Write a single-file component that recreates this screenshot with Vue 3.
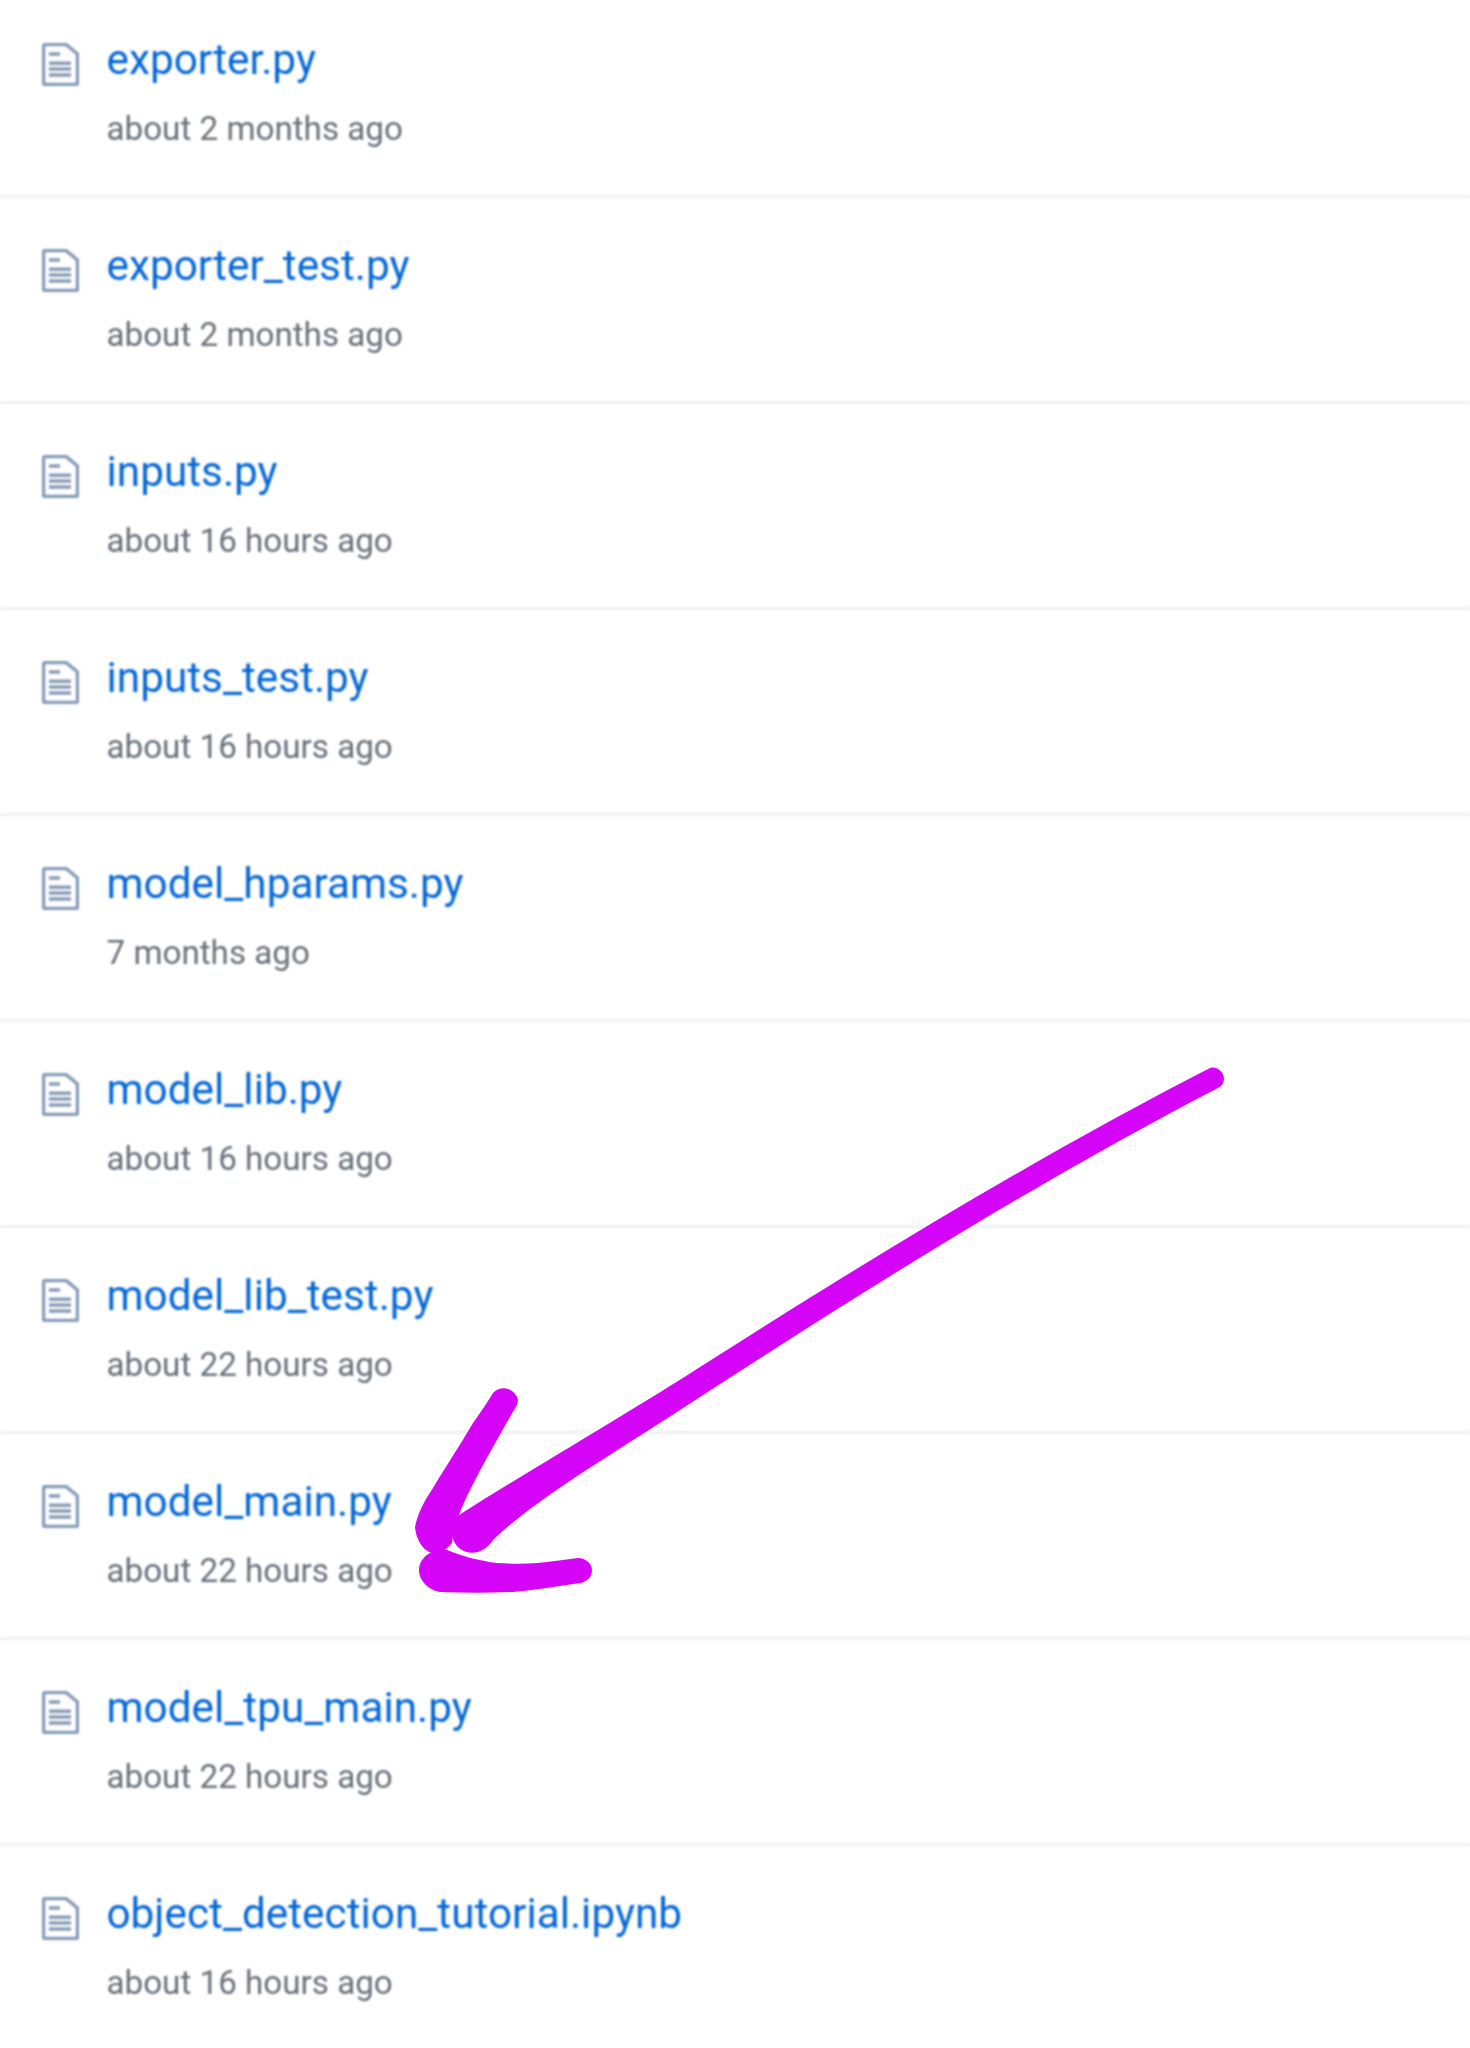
<script setup>
const files = [
  { name: 'exporter.py', age: 'about 2 months ago' },
  { name: 'exporter_test.py', age: 'about 2 months ago' },
  { name: 'inputs.py', age: 'about 16 hours ago' },
  { name: 'inputs_test.py', age: 'about 16 hours ago' },
  { name: 'model_hparams.py', age: '7 months ago' },
  { name: 'model_lib.py', age: 'about 16 hours ago' },
  { name: 'model_lib_test.py', age: 'about 22 hours ago' },
  { name: 'model_main.py', age: 'about 22 hours ago' },
  { name: 'model_tpu_main.py', age: 'about 22 hours ago' },
  { name: 'object_detection_tutorial.ipynb', age: 'about 16 hours ago' }
]
</script>

<template>
  <div class="page">
    <ul class="file-list">
      <li v-for="file in files" :key="file.name" class="file-row">
        <svg class="file-icon" viewBox="0 0 37 43" fill="none">
          <path class="outline" d="M3.500 1.500H24L35.500 11V39.500A2 2 0 0 1 33.500 41.500H3.500A2 2 0 0 1 1.500 39.500V3.500A2 2 0 0 1 3.500 1.500Z" />
          <path class="lines" d="M7 11H18M7 20.300H29M7 26H29M7 32H29" />
        </svg>
        <div class="file-text">
          <a class="file-name">{{ file.name }}</a>
          <div class="file-age">{{ file.age }}</div>
        </div>
      </li>
    </ul>

    <!-- hand drawn arrow on top of the list -->
    <svg class="scribble" viewBox="0 0 1470 2048">
      <path d="M1210 1068C1217 1066 1224 1072 1224 1079C1224 1083 1222 1086 1218 1088C1050 1175 880 1280 700 1397C620 1450 540 1495 493 1540C485 1552 472 1556 462 1550C454 1545 451 1537 453 1530C455 1524 456 1519 459 1515C530 1470 640 1406 700 1367C880 1252 1050 1150 1210 1068Z" />
      <path d="M493 1393C499 1386 510 1387 515 1394C519 1398 518 1402 517 1405C508 1420 501 1433 493 1447C485 1461 477 1476 470 1490C465 1500 462 1507 459 1515C455 1525 453 1535 452 1543C445 1552 438 1553 433 1553C424 1552 416 1540 415 1527C418 1512 425 1500 433 1488C445 1468 460 1445 473 1423C480 1413 487 1403 493 1393Z" />
      <path d="M430 1553C436 1550 442 1549 447 1550C465 1557 480 1561 497 1563C515 1564 532 1564 547 1562C558 1561 568 1559 578 1558C586 1558 592 1564 592 1570C592 1577 587 1582 580 1583C558 1586 535 1590 513 1592C490 1593 465 1593 440 1592C429 1590 419 1581 419 1570C419 1563 423 1557 430 1553Z" />
    </svg>
  </div>
</template>

<style>
body {
  background: #fff;
}
</style>

<style scoped>
.page {
  position: relative;
  width: 1470px;
  height: 2048px;
  overflow: hidden;
  background: #fff;
  font-family: Roboto, "Liberation Sans", sans-serif;
}
.file-list {
  list-style: none;
  margin: -8px 0 0;
  padding: 0;
  filter: blur(0.8px);
}
.file-row {
  display: flex;
  align-items: flex-start;
  gap: 27.500px;
  box-sizing: border-box;
  height: 206px;
  padding: 51px 0 0 42px;
  border-bottom: 3px solid #eef0f3;
}
.file-icon {
  flex: none;
  width: 37px;
  height: 43px;
}
.outline {
  stroke: #869bb7;
  stroke-width: 3.500;
}
.lines {
  stroke: #869bb7;
  stroke-width: 3.500;
}
.file-text {
  margin-top: -11.500px;
}
.file-name {
  display: block;
  font-size: 42.300px;
  line-height: 56px;
  color: #0366d6;
}
.file-age {
  margin-top: 19.500px;
  font-size: 33.200px;
  line-height: 44px;
  color: #666f79;
}
.scribble {
  position: absolute;
  top: 0;
  left: 0;
  width: 1470px;
  height: 2048px;
  fill: #d504f8;
}
</style>
